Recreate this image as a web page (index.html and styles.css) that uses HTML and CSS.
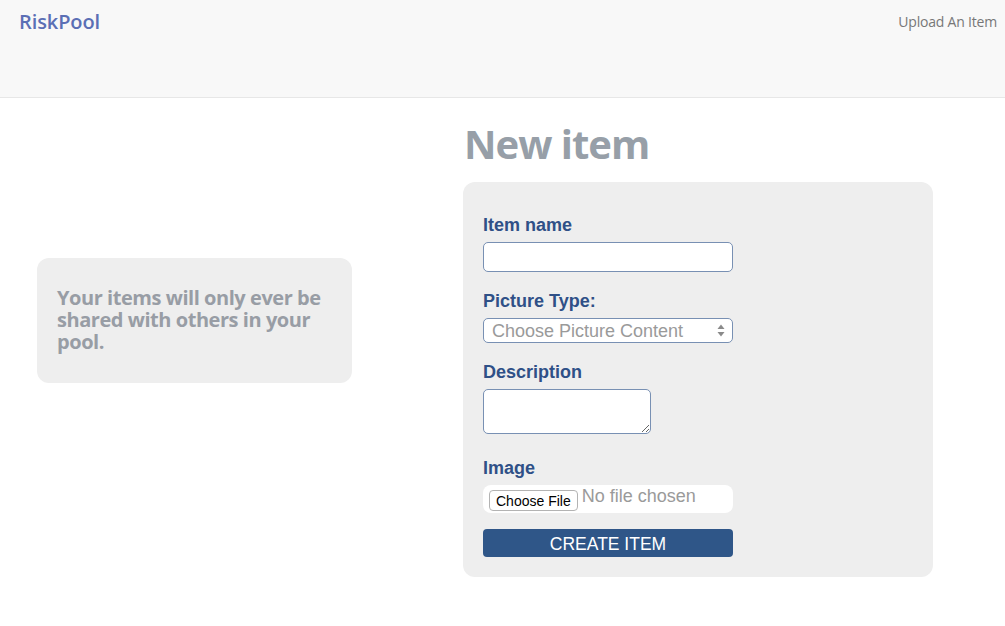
FILE: index.html
```html
<!DOCTYPE html>
<html lang="en">
<head>
<meta charset="utf-8">
<title>RiskPool - New item</title>
<link rel="stylesheet" href="styles.css">
</head>
<body>
<nav class="navbar">
  <a class="brand" href="#">RiskPool</a>
  <a class="nav-link" href="#">Upload An Item</a>
</nav>
<main class="main">
  <aside class="side">
    <div class="notice">Your items will only ever be shared with others in your pool.</div>
  </aside>
  <section class="content">
    <h1 class="title">New item</h1>
    <form class="item-form">
      <label class="label" for="name">Item name</label>
      <input class="field text-field" id="name" type="text">
      <label class="label" for="ptype">Picture Type:</label>
      <div class="select-wrap">
        <select class="field select-field" id="ptype">
          <option>Choose Picture Content</option>
        </select>
        <svg class="select-arrows" width="8" height="13" viewBox="0 0 8 13"><path d="M4 0.5 L7.5 5 L0.5 5 Z" fill="#8a8a8a"/><path d="M4 12.5 L7.5 8 L0.5 8 Z" fill="#8a8a8a"/></svg>
      </div>
      <label class="label" for="desc">Description</label>
      <textarea class="field area-field" id="desc"></textarea>
      <label class="label label-image" for="img">Image</label>
      <input class="file-field" id="img" type="file">
      <button class="submit" type="button">CREATE ITEM</button>
    </form>
  </section>
</main>
</body>
</html>
```

FILE: styles.css
```css
html, body {
  margin: 0;
  padding: 0;
  background: #ffffff;
}

body {
  font-family: "Liberation Sans", Arial, sans-serif;
}

.navbar {
  display: flex;
  justify-content: space-between;
  align-items: flex-start;
  height: 97px;
  background: #f8f8f8;
  border-bottom: 1px solid #e7e7e7;
  box-sizing: content-box;
}

.brand {
  font-family: "Open Sans", sans-serif;
  font-weight: 600;
  font-size: 20px;
  line-height: 20px;
  letter-spacing: -0.1px;
  color: #5b6fb5;
  text-decoration: none;
  padding: 12px 0 0 19px;
}

.nav-link {
  font-family: "Open Sans", sans-serif;
  font-size: 14px;
  line-height: 20px;
  letter-spacing: -0.2px;
  color: #777777;
  text-decoration: none;
  padding: 12px 8px 0 0;
}

.main {
  display: flex;
  align-items: flex-start;
}

.side {
  width: 315px;
  margin-left: 37px;
  margin-top: 160px;
}

.notice {
  background: #eeeeee;
  border-radius: 12px;
  padding: 29px 20px 30px;
  font-family: "Open Sans", sans-serif;
  font-weight: 700;
  font-size: 20px;
  line-height: 22px;
  letter-spacing: -0.45px;
  color: #989da5;
}

.content {
  width: 470px;
  margin-left: 111px;
}

.title {
  font-family: "Open Sans", sans-serif;
  font-weight: 700;
  font-size: 40px;
  line-height: 44px;
  letter-spacing: -1px;
  color: #979fa8;
  margin: 24px 0 16px 1px;
}

.item-form {
  background: #eeeeee;
  border-radius: 12px;
  padding: 34px 20px 20px;
  display: flex;
  flex-direction: column;
  align-items: flex-start;
}

.label {
  display: block;
  font-weight: 700;
  font-size: 18px;
  line-height: 18px;
  color: #2f5087;
  margin-bottom: 8px;
}

.field {
  box-sizing: border-box;
  display: block;
  background: #ffffff;
  border: 1px solid #7890b3;
  border-radius: 5px;
  font-family: "Liberation Sans", Arial, sans-serif;
  margin: 0 0 20px;
  outline: none;
}

.text-field {
  width: 250px;
  height: 30px;
  padding: 0 8px;
  font-size: 16px;
}

.select-wrap {
  position: relative;
  width: 250px;
  margin-bottom: 20px;
}

.select-field {
  width: 250px;
  height: 25px;
  margin: 0;
  padding: 0 0 0 8px;
  font-size: 18px;
  color: #9a9a9a;
  appearance: none;
  -webkit-appearance: none;
}

.select-arrows {
  position: absolute;
  right: 8px;
  top: 6px;
  pointer-events: none;
}

.area-field {
  width: 168px;
  height: 45px;
  padding: 4px;
  font-size: 14px;
  resize: both;
  margin-bottom: 25px;
}

.file-field {
  box-sizing: border-box;
  display: block;
  width: 250px;
  height: 28px;
  background: #ffffff;
  border-radius: 8px;
  padding: 0 0 0 6px;
  font-family: "Liberation Sans", Arial, sans-serif;
  font-size: 18px;
  line-height: 22px;
  color: #9a9a9a;
  margin: 0 0 16px;
}

.file-field::file-selector-button {
  font-family: "Liberation Sans", Arial, sans-serif;
  font-size: 14px;
  color: #000000;
  background: #ffffff;
  border: 1px solid #b3b3b3;
  border-radius: 4px;
  height: 21px;
  padding: 0 6px;
  margin: 5px 4px 0 0;
  vertical-align: top;
}

.submit {
  display: block;
  width: 250px;
  height: 28px;
  border: none;
  border-radius: 4px;
  background: #2f5688;
  color: #ffffff;
  font-family: "Liberation Sans", Arial, sans-serif;
  font-size: 17.5px;
  line-height: 30px;
  padding: 0;
  cursor: pointer;
}
```
